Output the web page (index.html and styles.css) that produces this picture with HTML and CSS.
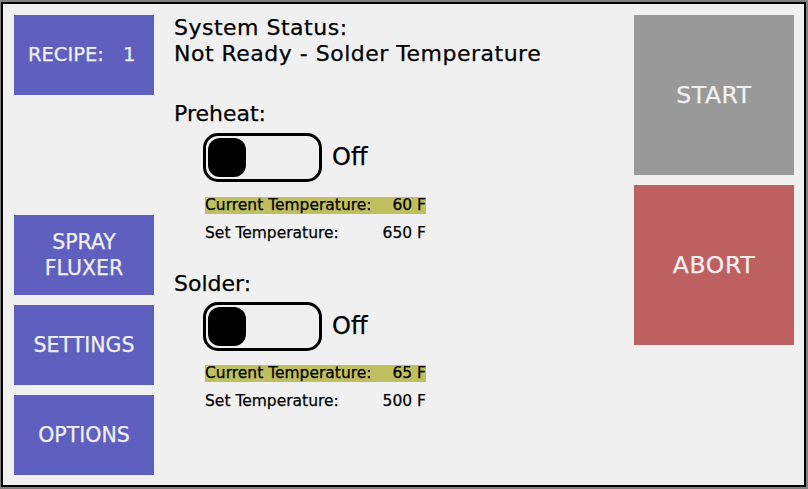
FILE: index.html
```html
<!DOCTYPE html>
<html>
<head>
<meta charset="utf-8">
<link rel="stylesheet" href="styles.css">
</head>
<body>
<div class="frame">
  <div class="nav">
    <div class="btn btn-blue recipe"><span>RECIPE:</span><span class="recipe-num">1</span></div>
    <div class="btn btn-blue">SPRAY<br>FLUXER</div>
    <div class="btn btn-blue">SETTINGS</div>
    <div class="btn btn-blue">OPTIONS</div>
  </div>

  <div class="main">
    <div class="status">System Status:<br>Not Ready - Solder Temperature</div>

    <div class="section-label label-preheat">Preheat:</div>
    <div class="toggle-row">
      <div class="toggle"><div class="knob"></div></div>
      <span class="toggle-text">Off</span>
    </div>
    <div class="temp-row current"><span>Current Temperature:</span><span>60 F</span></div>
    <div class="temp-row set"><span>Set Temperature:</span><span>650 F</span></div>

    <div class="section-label label-solder">Solder:</div>
    <div class="toggle-row">
      <div class="toggle"><div class="knob"></div></div>
      <span class="toggle-text">Off</span>
    </div>
    <div class="temp-row current"><span>Current Temperature:</span><span>65 F</span></div>
    <div class="temp-row set"><span>Set Temperature:</span><span>500 F</span></div>
  </div>

  <div class="actions">
    <div class="btn big start">START</div>
    <div class="btn big abort">ABORT</div>
  </div>
</div>
</body>
</html>
```
FILE: styles.css
```css
html, body {
  margin: 0;
  padding: 0;
}
body {
  background: #808080;
  width: 808px;
  height: 489px;
  overflow: hidden;
  font-family: "DejaVu Sans", sans-serif;
  color: #000;
  -webkit-text-stroke: 0.25px currentColor;
}
.frame {
  box-sizing: border-box;
  margin: 2px 2px 2px 1px;
  width: 805px;
  height: 485px;
  border: 2px solid #000;
  background: #f0f0f0;
  padding: 11px 10px 10px 11px;
  display: grid;
  grid-template-columns: 140px 1fr 160px;
  column-gap: 20px;
}
.nav {
  display: flex;
  flex-direction: column;
  gap: 10px;
}
.btn {
  display: flex;
  align-items: center;
  justify-content: center;
  text-align: center;
  color: #f0f0f0;
}
.btn-blue {
  width: 140px;
  height: 80px;
  background: #5f5fbf;
  font-size: 20.5px;
  line-height: 26px;
}
.recipe {
  margin-bottom: auto;
  justify-content: flex-start;
  padding-left: 14px;
  box-sizing: border-box;
  font-size: 19.5px;
}
.recipe-num {
  margin-left: 19px;
}

.main {
  display: flex;
  flex-direction: column;
  align-items: flex-start;
}
.status {
  font-size: 22px;
  line-height: 26px;
  letter-spacing: 0.5px;
}
.section-label {
  font-size: 22px;
  line-height: 26px;
}
.label-preheat { margin-top: 34px; }
.label-solder { margin-top: 29px; }

.toggle-row {
  display: flex;
  align-items: center;
  gap: 10px;
  margin-top: 6px;
  margin-left: 29px;
}
.label-solder + .toggle-row { margin-top: 5px; }
.toggle {
  box-sizing: border-box;
  width: 119px;
  height: 49px;
  border: 3px solid #000;
  border-radius: 15px;
  padding: 2px;
}
.knob {
  width: 38px;
  height: 39px;
  background: #000;
  border-radius: 12px;
}
.toggle-text {
  font-size: 24px;
  line-height: 30px;
  margin-top: -2px;
}

.temp-row {
  display: flex;
  justify-content: space-between;
  width: 221px;
  margin-left: 31px;
  font-size: 15.5px;
  line-height: 17px;
  height: 17px;
}
.temp-row.current {
  background: #bfbf60;
  margin-top: 15px;
}
.label-solder + .toggle-row + .temp-row.current { margin-top: 14px; }
.temp-row.set {
  margin-top: 11px;
}

.actions {
  display: flex;
  flex-direction: column;
  gap: 10px;
}
.big {
  width: 160px;
  height: 160px;
  font-size: 23.5px;
  letter-spacing: 0.6px;
}
.start { background: #999999; }
.abort { background: #bf6060; }
```
